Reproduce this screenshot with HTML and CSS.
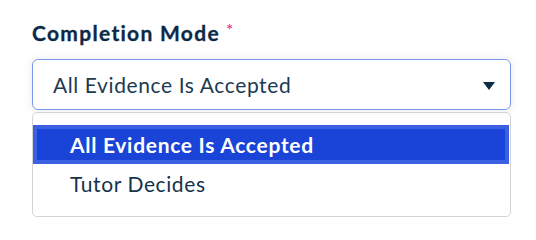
FILE: index.html
```html
<!DOCTYPE html>
<html lang="en">
<head>
<meta charset="utf-8">
<title>Completion Mode</title>
<link rel="stylesheet" href="styles.css">
</head>
<body>
<div class="field">
  <div class="label">Completion Mode <span class="req">*</span></div>
  <div class="select">
    <span class="select-value">All Evidence Is Accepted</span>
    <svg class="caret" width="12" height="8" viewBox="0 0 12 8"><path d="M0 0H12L6 8Z" fill="#0c2b45"/></svg>
  </div>
  <div class="listbox">
    <div class="option selected">All Evidence Is Accepted</div>
    <div class="option">Tutor Decides</div>
  </div>
</div>
</body>
</html>
```

FILE: styles.css
```css
html, body {
  margin: 0;
  padding: 0;
  background: #ffffff;
}
body {
  font-family: Lato, "Noto Sans", sans-serif;
  width: 536px;
  height: 218px;
  overflow: hidden;
}
.field {
  padding: 17px 25px 0 32px;
}
.label {
  font-size: 21px;
  font-weight: 700;
  color: #0a2a47;
  line-height: 24px;
  letter-spacing: 1.3px;
  height: 24px;
  white-space: nowrap;
  -webkit-text-stroke: 0.3px #0a2a47;
}
.req {
  color: #e8468c;
  font-size: 16px;
  vertical-align: 6px;
  font-weight: 700;
  letter-spacing: 0;
  -webkit-text-stroke: 0;
}
.select {
  margin-top: 18px;
  height: 51px;
  box-sizing: border-box;
  border: 1px solid #7d97ea;
  border-radius: 6px;
  box-shadow: 0 0 8px rgba(120, 130, 160, 0.18);
  display: flex;
  align-items: center;
  justify-content: space-between;
  padding: 0 15px 0 20px;
}
.select-value {
  font-size: 21px;
  color: #1d3a52;
  letter-spacing: 0.6px;
}
.caret {
  display: block;
  margin-top: 2px;
}
.listbox {
  margin-top: 2px;
  border: 1px solid #d4d4d4;
  border-radius: 5px;
  padding: 12px 0;
  height: 105px;
  box-sizing: border-box;
}
.option {
  height: 39px;
  line-height: 39px;
  padding-left: 37px;
  font-size: 21px;
  color: #15324b;
  letter-spacing: 0.6px;
}
.option.selected {
  background: #1a43d8;
  box-shadow: inset 0 0 0 4px #3c60e2;
  color: #ffffff;
  font-weight: 700;
  letter-spacing: 0.7px;
  margin-right: 1px;
}
```
